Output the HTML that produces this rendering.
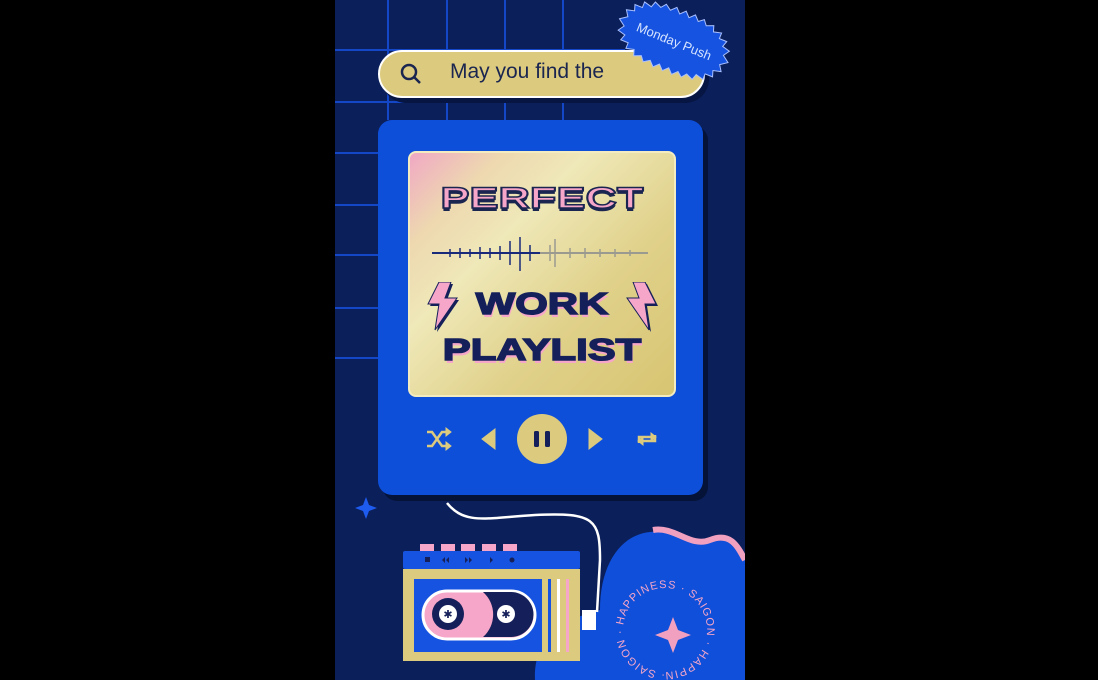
<!DOCTYPE html>
<html><head><meta charset="utf-8"><style>
*{margin:0;padding:0;box-sizing:border-box}
body{width:1098px;height:680px;background:#000;position:relative;overflow:hidden;font-family:"Liberation Sans",sans-serif}
.p{position:absolute;left:335px;top:0;width:410px;height:680px;background:#0b1f5a;overflow:hidden}
.a{position:absolute}
.big{font-family:"Liberation Sans",sans-serif;font-weight:900;transform-origin:center}
</style></head><body>
<div class="p">
<svg class="a" style="left:0;top:0" width="410" height="680">
<g stroke="#1446c8" stroke-width="2" fill="none">
<line x1="53" y1="0" x2="53" y2="120"/><line x1="112" y1="0" x2="112" y2="120"/><line x1="170" y1="0" x2="170" y2="120"/><line x1="228" y1="0" x2="228" y2="120"/>
<line x1="0" y1="50" x2="290" y2="50"/><line x1="0" y1="102" x2="290" y2="102"/><line x1="0" y1="153" x2="45" y2="153"/><line x1="0" y1="205" x2="45" y2="205"/><line x1="0" y1="255" x2="45" y2="255"/><line x1="0" y1="308" x2="45" y2="308"/><line x1="0" y1="358" x2="45" y2="358"/>
</g>
<path d="M200 680 C198 640 225 620 265 610 C265 565 285 535 315 532 C345 528 360 548 378 540 C395 532 405 545 410 555 L410 680 Z" fill="#0f4fd9"/>
<path d="M318 530 C340 526 355 548 375 540 C395 532 402 545 410 560" stroke="#f2a0c0" stroke-width="6" fill="none"/>
<path d="M338 617 l5 13 13 5 -13 5 -5 13 -5 -13 -13 -5 13 -5z" fill="#f2a0c0"/>
<path d="M31 497 l3 8 8 3 -8 3 -3 8 -3 -8 -8 -3 8 -3z" fill="#1e5cf0"/>
<path d="M112 503 C130 525 150 518 200 515 C260 512 265 520 265 560 L262 612" stroke="#fff" stroke-width="2.5" fill="none"/>
<rect x="247" y="610" width="14" height="20" fill="#fff"/>
</svg>
<div class="a" style="left:43px;top:50px;width:327px;height:48px;background:#dccb7e;border:2px solid #fff;border-radius:24px;box-shadow:4px 5px 0 #061542"></div>
<svg class="a" style="left:64px;top:62px" width="24" height="24"><circle cx="10" cy="10" r="7" stroke="#1a2550" stroke-width="2.5" fill="none"/><line x1="15" y1="15" x2="21" y2="21" stroke="#1a2550" stroke-width="2.5"/></svg>
<div class="a" style="left:115px;top:60px;font-size:21px;color:#1a2550">May you find the</div>
<svg class="a" style="left:275px;top:0" width="135" height="85"><g transform="rotate(22 67 42)">
<polygon fill="#1553e0" stroke="#a9c0ff" stroke-width="1" points="
5,42 12,37 8,31 16,29 14,23 22,23 22,17 30,19 32,13 39,16 43,11 49,15 54,10 59,15 64,10 69,15 74,10 79,15 84,11 88,16 95,13 97,19 105,17 105,23 113,23 111,29 119,31 115,37 122,42 115,47 119,53 111,55 113,61 105,61 105,67 97,65 95,71 88,68 84,73 79,69 74,74 69,69 64,74 59,69 54,74 49,69 43,73 39,68 32,71 30,65 22,67 22,61 14,61 16,55 8,53 12,47"/>
<text x="64" y="47" text-anchor="middle" font-size="13" fill="#d6e3ff" font-family="Liberation Sans">Monday Push</text></g></svg>
<div class="a" style="left:43px;top:120px;width:325px;height:375px;background:#0e4fd9;border-radius:14px;box-shadow:5px 6px 0 #061338"></div>
<div class="a" style="left:73px;top:151px;width:268px;height:246px;border-radius:8px;border:2px solid #f3ecc0;background:linear-gradient(135deg,#f0a8c4 0%,#eed8b0 18%,#efe8b8 35%,#e0d18a 65%,#d8c572 100%)"></div>
<div class="a big" style="left:73px;top:182px;width:268px;text-align:center;font-size:30px;color:#f6a6c8;-webkit-text-stroke:1.5px #1a2550;transform:scaleX(1.45);text-shadow:0 3px 0 #1a2550">PERFECT</div>
<svg class="a" style="left:95px;top:235px" width="220" height="36"><line x1="2" y1="18" x2="110" y2="18" stroke="#1a2a7a" stroke-width="2"/><line x1="110" y1="18" x2="218" y2="18" stroke="#9a9a90" stroke-width="2"/>
<g stroke="#1a2a7a" stroke-width="1.5"><line x1="20" y1="14" x2="20" y2="22"/><line x1="30" y1="13" x2="30" y2="23"/><line x1="40" y1="14" x2="40" y2="22"/><line x1="50" y1="12" x2="50" y2="24"/><line x1="60" y1="13" x2="60" y2="23"/><line x1="70" y1="11" x2="70" y2="25"/><line x1="80" y1="6" x2="80" y2="30"/><line x1="90" y1="2" x2="90" y2="36"/><line x1="100" y1="10" x2="100" y2="26"/></g>
<g stroke="#9a9a90" stroke-width="1.5"><line x1="120" y1="10" x2="120" y2="26"/><line x1="125" y1="4" x2="125" y2="32"/><line x1="140" y1="13" x2="140" y2="23"/><line x1="155" y1="13" x2="155" y2="23"/><line x1="170" y1="14" x2="170" y2="22"/><line x1="185" y1="14" x2="185" y2="22"/><line x1="200" y1="15" x2="200" y2="21"/></g></svg>
<div class="a big" style="left:73px;top:286px;width:268px;text-align:center;font-size:31px;color:#15205a;-webkit-text-stroke:1.5px #15205a;transform:scaleX(1.35);text-shadow:1px 3px 0 #f6a6c8">WORK</div>
<div class="a big" style="left:73px;top:332px;width:268px;text-align:center;font-size:31px;color:#15205a;-webkit-text-stroke:1.5px #15205a;transform:scaleX(1.35);text-shadow:1px 3px 0 #f6a6c8">PLAYLIST</div>
<svg class="a" style="left:92px;top:282px" width="36" height="50"><polygon points="12,0 1,22 12,22 8,48 30,16 18,16 24,0" fill="#15205a" transform="translate(2,2)"/><polygon points="12,0 1,22 12,22 8,48 30,16 18,16 24,0" fill="#f6a6c8" stroke="#15205a" stroke-width="1"/></svg>
<svg class="a" style="left:288px;top:282px" width="36" height="50"><g transform="translate(34,0) scale(-1,1)"><polygon points="12,0 1,22 12,22 8,48 30,16 18,16 24,0" fill="#15205a" transform="translate(-2,2)"/><polygon points="12,0 1,22 12,22 8,48 30,16 18,16 24,0" fill="#f6a6c8" stroke="#15205a" stroke-width="1"/></g></svg>
<svg class="a" style="left:88px;top:412px" width="240" height="52" fill="#dccb7e" stroke="#dccb7e">
<path d="M4 20 h5 l10 14 h6 M4 34 h5 l10-14 h6" fill="none" stroke-width="2.5"/><path d="M23 16 l5 4-5 4z M23 30 l5 4-5 4z"/>
<path d="M72 17 v20 l-13-10z"/>
<circle cx="119" cy="27" r="25" stroke="none"/><rect x="111" y="19" width="5" height="16" rx="1.5" fill="#15205a" stroke="none"/><rect x="122" y="19" width="5" height="16" rx="1.5" fill="#15205a" stroke="none"/>
<path d="M166 17 v20 l13-10z"/>
<path d="M216 31 v-6 h14 M232 23 v6 h-14" fill="none" stroke-width="2.5"/><path d="M228 21 l5 4-5 4z M220 25 l-5 4 5 4z"/>
</svg>
<svg class="a" style="left:68px;top:540px" width="180" height="125">
<g fill="#f6a6c8"><rect x="17" y="4" width="14" height="8"/><rect x="38" y="4" width="14" height="8"/><rect x="58" y="4" width="14" height="8"/><rect x="79" y="4" width="14" height="8"/><rect x="100" y="4" width="14" height="8"/></g>
<rect x="0" y="11" width="177" height="18" fill="#1553e0" rx="2"/>
<g fill="#15205a"><rect x="22" y="17" width="5" height="5"/><path d="M42 17 l-3 3 3 3z M46 17 l-3 3 3 3z M62 17 l3 3-3 3z M66 17 l3 3-3 3z M87 17 l3 3-3 3z"/><circle cx="109" cy="20" r="2.5"/></g>
<rect x="0" y="29" width="177" height="92" fill="#dccb7e"/>
<rect x="11" y="39" width="128" height="73" fill="#1553e0"/>
<rect x="20" y="51" width="112" height="48" rx="24" fill="#f6a6c8" stroke="#fff" stroke-width="3"/>
<path d="M108 52 a22 22 0 0 1 0 45 h-28 a30 30 0 0 0 0-45z" fill="#15205a"/>
<circle cx="45" cy="74" r="16" fill="#15205a"/><circle cx="45" cy="74" r="9" fill="#fff"/><circle cx="103" cy="74" r="9" fill="#fff"/>
<text x="45" y="78" text-anchor="middle" font-size="11" fill="#15205a">✱</text><text x="103" y="78" text-anchor="middle" font-size="11" fill="#15205a">✱</text>
<rect x="145" y="39" width="3" height="73" fill="#1553e0"/><rect x="154" y="39" width="3" height="73" fill="#fff"/><rect x="163" y="39" width="3" height="73" fill="#f6a6c8"/>
</svg>
<svg class="a" style="left:275px;top:575px" width="110" height="105"><defs><path id="c" d="M55 97 a42 42 0 1 1 0.1 0"/></defs><text font-size="11" fill="#f6a6c8" letter-spacing="1" font-family="Liberation Sans"><textPath href="#c">· SAIGON · HAPPINESS · SAIGON · HAPPINESS</textPath></text></svg>
</div>
</body></html>
